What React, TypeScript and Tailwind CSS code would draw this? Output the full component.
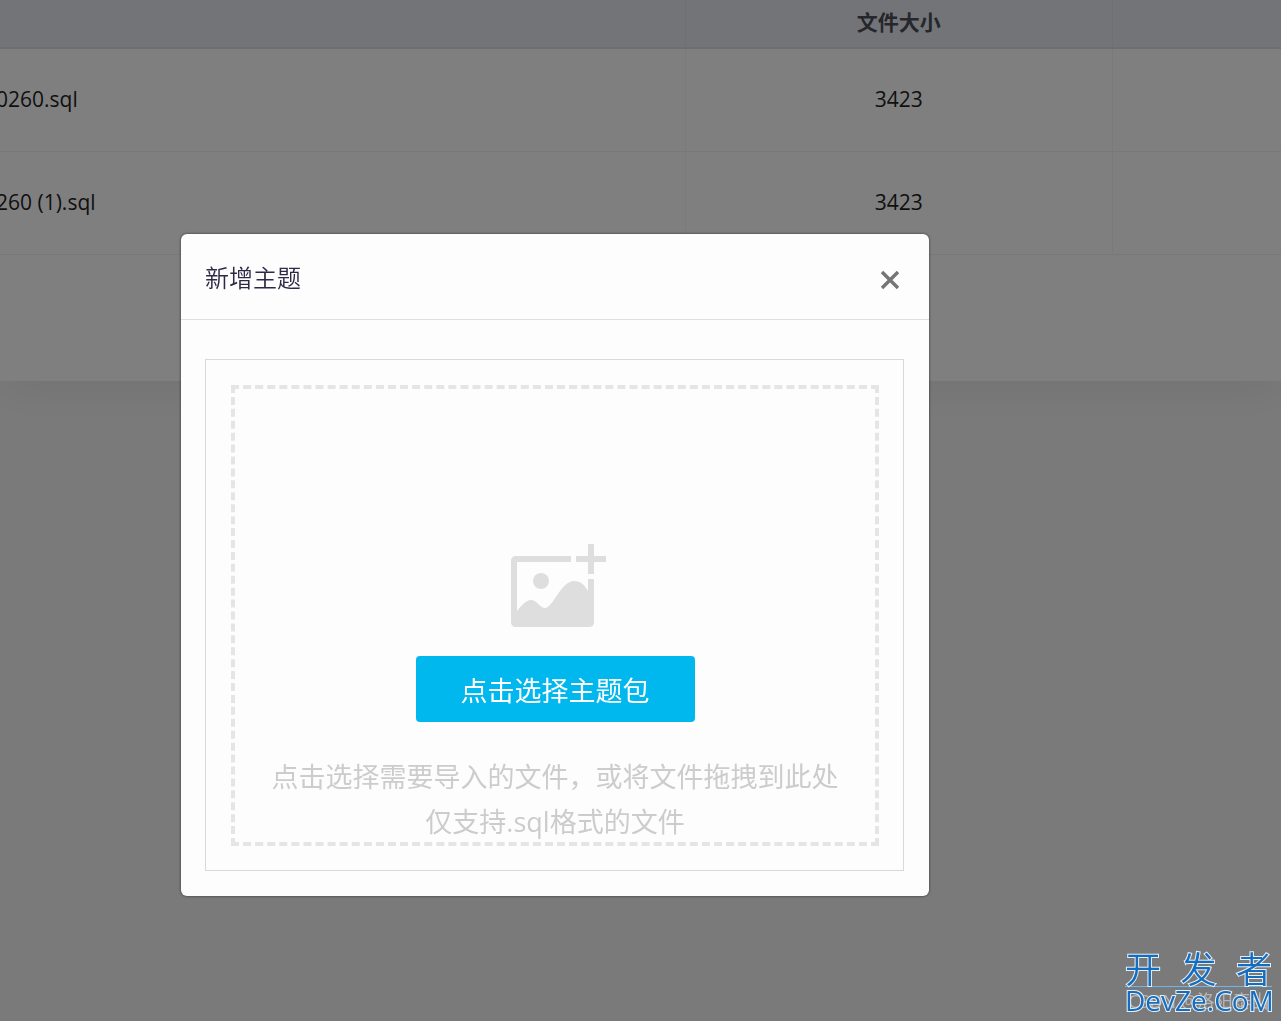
import { useRef, useState } from 'react';

const files = [
	{ name: '0260.sql', size: 3423 },
	{ name: '260 (1).sql', size: 3423 },
];

function FileTable() {
	return (
		<div className="bg-white pb-[126px] shadow-[0_12px_40px_rgba(0,0,0,0.06)]">
			<table className="w-full table-fixed text-[21px] leading-8 text-[#1f1f1f]">
				<thead>
					<tr className="h-12 border-b-2 border-[#dcdde1] bg-[#e6e8ef] text-[#4c4f58]">
						<th className="w-[53.5%] border-r border-[#dfe1e8]" />
						<th className="w-1/3 border-r border-[#dfe1e8] pb-1 font-bold">文件大小</th>
						<th />
					</tr>
				</thead>
				<tbody>
					{files.map((file) => (
						<tr key={file.name} className="h-[103px] border-b border-[#f0f0f0]">
							<td className="border-r border-[#f4f4f4] pb-0.5 whitespace-nowrap">
								<span className="-ml-1">{file.name}</span>
							</td>
							<td className="border-r border-[#f4f4f4] pb-0.5 text-center">{file.size}</td>
							<td />
						</tr>
					))}
				</tbody>
			</table>
		</div>
	);
}

function ImageAddIcon() {
	return (
		<svg width="96" height="84" viewBox="0 0 96 84" fill="#dedede" aria-hidden="true">
			<path d="M77 0h6v12h12v6H83v12h-6V18H65v-6h12z" />
			<path d="M5 12h55v6H6v49c5-6 9-11 14-11 6 0 9 8 14 8 8 0 16-27 29-27 6 0 10 3 14 10V35h6v43c0 3-2 5-5 5H5c-3 0-5-2-5-5V17c0-3 2-5 5-5z" />
			<circle cx="30" cy="37" r="8" />
		</svg>
	);
}

function UploadDialog({ onClose }: { onClose: () => void }) {
	const input = useRef<HTMLInputElement>(null);

	return (
		<div className="fixed inset-0 bg-black/50 pt-[234px] pl-[181px]">
			<div role="dialog" aria-labelledby="dialog-title" className="w-full max-w-[748px] rounded-md bg-[#fefdfe] shadow-[0_0_3px_rgba(0,0,0,0.6)]">
				<div className="flex h-[86px] items-center justify-between border-b border-[#e0dfe3] px-6">
					<h2 id="dialog-title" className="pt-0.5 text-2xl font-[350] text-[#2c2a45]">新增主题</h2>
					<button type="button" aria-label="关闭" className="p-1 pt-2" onClick={onClose}>
						<svg width="22" height="22" viewBox="0 0 22 22" stroke="#757575" strokeWidth="3.4" aria-hidden="true">
							<path d="M3 4l16 16M19 4L3 20" />
						</svg>
					</button>
				</div>
				<div className="pt-[39px] pr-[25px] pb-[25px] pl-6">
					<div className="border border-[#d9d8dc] pt-[25px] pr-6 pb-6 pl-[25px]">
						<div className="flex flex-col items-center border-4 border-dashed border-[#e5e5e5] pt-[155px]">
							<div className="pl-2">
								<ImageAddIcon />
							</div>
							<button
								type="button"
								className="mt-7 h-[66px] rounded bg-[#00b7ee] px-[45px] pt-1 text-[27px] text-white"
								onClick={() => input.current?.click()}
							>
								点击选择主题包
							</button>
							<input ref={input} type="file" accept=".sql" aria-label="点击选择主题包" className="hidden" />
							<p className="mt-8 -mb-0.5 text-center text-[27px] leading-[45px] text-[#cccccc]">
								点击选择需要导入的文件，或将文件拖拽到此处
								<br />
								仅支持.sql格式的文件
							</p>
						</div>
					</div>
				</div>
			</div>
		</div>
	);
}

function Watermark() {
	return (
		<div className="pointer-events-none fixed right-[9px] bottom-2 w-[147px] text-[#176dbd]">
			<div className="absolute inset-x-0 bottom-0 text-center text-[18px] leading-6 whitespace-nowrap text-[#b5b5b5]">CSDN @洛阳泰山</div>
			<div className="relative [paint-order:stroke_fill] [-webkit-text-stroke:2px_#e4eef7]">
				<div className="flex justify-between border-b border-[#6fb6e8] text-[36px] leading-8 font-[350]">
					<span>开</span>
					<span>发</span>
					<span>者</span>
				</div>
				<div className="text-[28px] leading-[26px]">DevZe.CoM</div>
			</div>
		</div>
	);
}

export default function App() {
	const [open, setOpen] = useState(true);

	return (
		<div className="min-h-screen overflow-hidden bg-[#f5f5f5] font-['Open_Sans','Noto_Sans_CJK_SC',sans-serif]">
			<FileTable />
			{open && <UploadDialog onClose={() => setOpen(false)} />}
			<Watermark />
		</div>
	);
}
